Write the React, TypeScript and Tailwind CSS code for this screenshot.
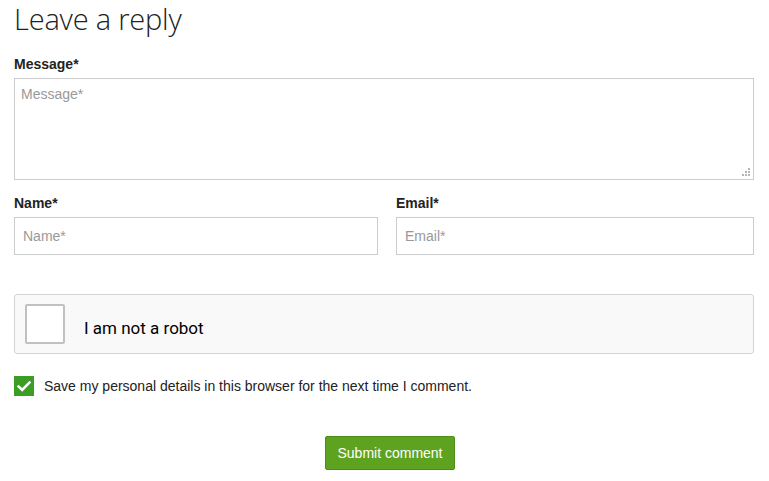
import React from 'react';

const App: React.FC = () => {
  return (
    <div className="w-[769px] h-[481px] bg-white overflow-hidden pl-[14px] pr-[15px] font-['Liberation_Sans',Arial,sans-serif] text-[#222]">
      <h2 className="font-['Open_Sans',sans-serif] font-light text-[29px] leading-[38px] text-[#222] tracking-[-0.2px]">
        Leave a reply
      </h2>

      {/* Message */}
      <label className="block mt-[17px] text-[14px] font-bold leading-[18px] text-[#222]">Message*</label>
      <div className="relative mt-[5px]">
        <textarea
          placeholder="Message*"
          className="block w-full h-[102px] border border-[#ccc] px-[6px] py-[6px] text-[14px] leading-[18px] placeholder:text-[#999] outline-none resize-none"
        />
        {/* resize grip */}
        <svg className="absolute right-[4px] bottom-[4px]" width="8" height="8" viewBox="0 0 8 8" fill="#b5b5b5">
          <rect x="6" y="0" width="2" height="2" />
          <rect x="3" y="3" width="2" height="2" />
          <rect x="6" y="3" width="2" height="2" />
          <rect x="0" y="6" width="2" height="2" />
          <rect x="3" y="6" width="2" height="2" />
          <rect x="6" y="6" width="2" height="2" />
        </svg>
      </div>

      {/* Name / Email */}
      <div className="flex gap-[18px] mt-[14px]">
        <div className="w-[364px]">
          <label className="block text-[14px] font-bold leading-[18px]">Name*</label>
          <input
            placeholder="Name*"
            className="block mt-[5px] w-full h-[38px] border border-[#ccc] px-[8px] text-[14px] placeholder:text-[#999] outline-none"
          />
        </div>
        <div className="flex-1">
          <label className="block text-[14px] font-bold leading-[18px]">Email*</label>
          <input
            placeholder="Email*"
            className="block mt-[5px] w-full h-[38px] border border-[#ccc] px-[8px] text-[14px] placeholder:text-[#999] outline-none"
          />
        </div>
      </div>

      {/* Captcha */}
      <div className="mt-[39px] h-[60px] bg-[#f9f9f9] border border-[#d3d3d3] rounded-[3px] flex items-center pl-[10px]">
        <div className="w-[40px] h-[40px] bg-white border-2 border-[#c1c1c1] rounded-[2px]" />
        <span className="ml-[19px] font-['Roboto',sans-serif] text-[17px] text-[#000] mt-[10px]">I am not a robot</span>
      </div>

      {/* Save details */}
      <div className="flex items-center mt-[22px] h-[20px]">
        <div className="w-[20px] h-[20px] bg-[#3b9d23] flex items-center justify-center">
          <svg width="14" height="12" viewBox="0 0 14 12" fill="none">
            <path d="M1.5 6.5 L5.2 10 L12.5 2.5" stroke="white" strokeWidth="2.6" strokeLinecap="square" />
          </svg>
        </div>
        <span className="ml-[10px] text-[14px] text-[#222]">Save my personal details in this browser for the next time I comment.</span>
      </div>

      {/* Submit */}
      <div className="flex justify-center mt-[40px]">
        <button className="h-[34px] px-[11px] bg-[#5ea320] border border-[#4e8c1a] rounded-[2px] text-white text-[14px] ml-[12px]">
          Submit comment
        </button>
      </div>
    </div>
  );
};

export default App;
